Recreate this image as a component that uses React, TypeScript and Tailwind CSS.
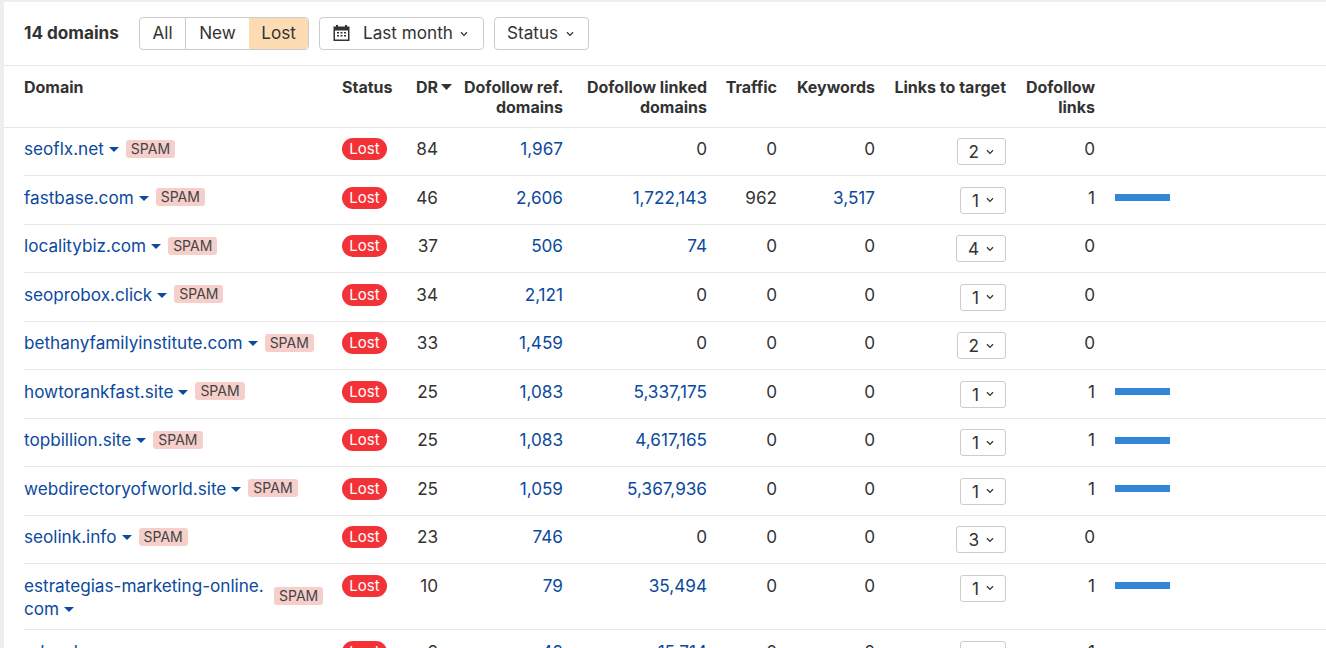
const font = "font-['Inter',sans-serif]";

const grid = "grid grid-cols-[318px_74px_48px_99px_144px_70px_98px_131px_89px_1fr]";

type R = {
  d: string; d2?: string; dr: string; ref: string; linked: string; traffic: string; kw: string; links: string; df: string; bar?: boolean; noSpam?: boolean;
};

const rows: R[] = [
  { d: "seoflx.net", dr: "84", ref: "1,967", linked: "0", traffic: "0", kw: "0", links: "2", df: "0" },
  { d: "fastbase.com", dr: "46", ref: "2,606", linked: "1,722,143", traffic: "962", kw: "3,517", links: "1", df: "1", bar: true },
  { d: "localitybiz.com", dr: "37", ref: "506", linked: "74", traffic: "0", kw: "0", links: "4", df: "0" },
  { d: "seoprobox.click", dr: "34", ref: "2,121", linked: "0", traffic: "0", kw: "0", links: "1", df: "0" },
  { d: "bethanyfamilyinstitute.com", dr: "33", ref: "1,459", linked: "0", traffic: "0", kw: "0", links: "2", df: "0" },
  { d: "howtorankfast.site", dr: "25", ref: "1,083", linked: "5,337,175", traffic: "0", kw: "0", links: "1", df: "1", bar: true },
  { d: "topbillion.site", dr: "25", ref: "1,083", linked: "4,617,165", traffic: "0", kw: "0", links: "1", df: "1", bar: true },
  { d: "webdirectoryofworld.site", dr: "25", ref: "1,059", linked: "5,367,936", traffic: "0", kw: "0", links: "1", df: "1", bar: true },
  { d: "seolink.info", dr: "23", ref: "746", linked: "0", traffic: "0", kw: "0", links: "3", df: "0" },
  { d: "estrategias-marketing-online.", d2: "com", dr: "10", ref: "79", linked: "35,494", traffic: "0", kw: "0", links: "1", df: "1", bar: true },
  { d: "edanah.com", dr: "8", ref: "42", linked: "15,714", traffic: "0", kw: "0", links: "1", df: "1", noSpam: true },
];

function Caret({ className = "", w = 10, h = 5 }: { className?: string; w?: number; h?: number }) {
  return (
    <svg width={w} height={h} viewBox="0 0 10 5" preserveAspectRatio="none" className={className}>
      <path d="M0 0h10L5 5z" fill="currentColor" />
    </svg>
  );
}

function Chevron() {
  return (
    <svg width="8" height="6" viewBox="0 0 8 6" className="shrink-0 text-[#333]">
      <path d="M1 1.200 4 4.400 7 1.200" fill="none" stroke="currentColor" strokeWidth="1.300" />
    </svg>
  );
}

function Calendar() {
  return (
    <svg width="17" height="16" viewBox="0 0 17 16" className="text-[#333]">
      <path fillRule="evenodd" fill="currentColor" d="M3 0h2v1.500h7V0h2v1.500h2.500V16H.5V1.500H3zM2 5.500V14.500h13V5.500z" />
      <path fill="currentColor" d="M4 7h2v1.500H4zM7.500 7h2v1.500h-2zM11 7h2v1.500h-2zM4 10h2v1.500H4zM7.500 10h2v1.500h-2zM11 10h2v1.500h-2z" />
    </svg>
  );
}

function Row({ r, last }: { r: R; last: boolean }) {
  const blue = "text-[#0b4a9e]";
  const tall = !!r.d2;
  return (
    <div className={`${grid} ml-5 ${tall ? "h-[66px]" : "h-[48.5px]"} ${last ? "" : "border-b border-[#e8e8e8]"} text-[17.15px] leading-[23px] text-[#333]`}>
      <div className="flex items-start pt-[9.5px]">
        {tall ? (
          <div className="flex w-[250px] flex-col">
            <span className={`whitespace-nowrap ${blue}`}>{r.d}</span>
            <span className={`flex items-center gap-[5px] ${blue}`}>{r.d2}<Caret className="mt-[2px]" /></span>
          </div>
        ) : (
          <span className={`flex items-center gap-[5px] ${blue}`}>{r.d}<Caret className="mt-[2px]" /></span>
        )}
        {r.noSpam ? null : (
          <span className={`${tall ? "ml-0 mt-[13.5px]" : "ml-[7px] mt-[2.5px]"} rounded-[3px] bg-[#f6cfcb] px-[5px] text-[14px] leading-[18px] text-[#444]`}>SPAM</span>
        )}
      </div>
      <div className="pt-[10.5px]">
        <span className="block h-[22px] w-[45px] rounded-full bg-[#f23237] text-center text-[15px] leading-[22px] text-white">Lost</span>
      </div>
      <div className="pt-[9.5px]"><span className="block w-[22px] text-right">{r.dr}</span></div>
      <div className={`pt-[9.5px] text-right ${blue}`}>{r.ref}</div>
      <div className={`pt-[9.5px] text-right ${r.linked === "0" ? "" : blue}`}>{r.linked}</div>
      <div className="pt-[9.5px] text-right">{r.traffic}</div>
      <div className={`pt-[9.5px] text-right ${r.kw === "0" ? "" : blue}`}>{r.kw}</div>
      <div className="flex justify-end pt-[10.5px]">
        <span className="flex h-[27px] items-center gap-[7px] rounded-[3px] border border-[#ccc] bg-white pl-[11px] pr-[11px]">
          {r.links}<Chevron />
        </span>
      </div>
      <div className="pt-[9.5px] text-right">{r.df}</div>
      <div className="pl-[20px] pt-[18px]">
        {r.bar ? <div className="h-[7px] w-[55px] bg-[#3385d6]" /> : null}
      </div>
    </div>
  );
}

export default function App() {
  return (
    <div className={`h-[648px] w-[1326px] overflow-hidden bg-[#eceef0] pl-1 pt-[2px] ${font}`}>
      <div className="h-full bg-white">
        <div className="flex h-[64px] items-center border-b border-[#e8e8e8] pl-5 text-[17.15px] text-[#333]">
          <span className="w-[115px] pb-[2px] font-bold">14 domains</span>
          <div className="flex h-[33px] overflow-hidden rounded-[4px] border border-[#ccc]">
            <span className="flex w-[46px] items-center justify-center border-r border-[#ccc] pb-[2px]">All</span>
            <span className="flex w-[63px] items-center justify-center pb-[2px]">New</span>
            <span className="flex w-[59px] items-center justify-center bg-[#fedcb3] pb-[2px]">Lost</span>
          </div>
          <div className="ml-[10px] flex h-[33px] w-[165px] items-center rounded-[4px] border border-[#ccc] pb-[2px] pl-[13px]">
            <Calendar />
            <span className="ml-[13px]">Last month</span>
            <span className="ml-[7px] mt-[2px]"><Chevron /></span>
          </div>
          <div className="ml-[10px] flex h-[33px] w-[95px] items-center rounded-[4px] border border-[#ccc] pb-[2px] pl-[12px]">
            <span>Status</span>
            <span className="ml-[8px] mt-[2px]"><Chevron /></span>
          </div>
        </div>
        <div className={`${grid} h-[61.5px] border-b border-[#e8e8e8] pl-5 pt-[11px] text-[16px] font-bold leading-[20px] text-[#333]`}>
          <div>Domain</div>
          <div>Status</div>
          <div className="flex items-start gap-[3px]">DR<Caret w={11} h={6} className="mt-[7px] text-[#333]" /></div>
          <div className="whitespace-nowrap text-right">Dofollow ref.<br />domains</div>
          <div className="text-right">Dofollow linked domains</div>
          <div className="text-right">Traffic</div>
          <div className="text-right">Keywords</div>
          <div className="text-right">Links to target</div>
          <div className="text-right">Dofollow links</div>
          <div />
        </div>
        {rows.map((r, i) => (
          <Row key={r.d} r={r} last={i === rows.length - 1} />
        ))}
      </div>
    </div>
  );
}
